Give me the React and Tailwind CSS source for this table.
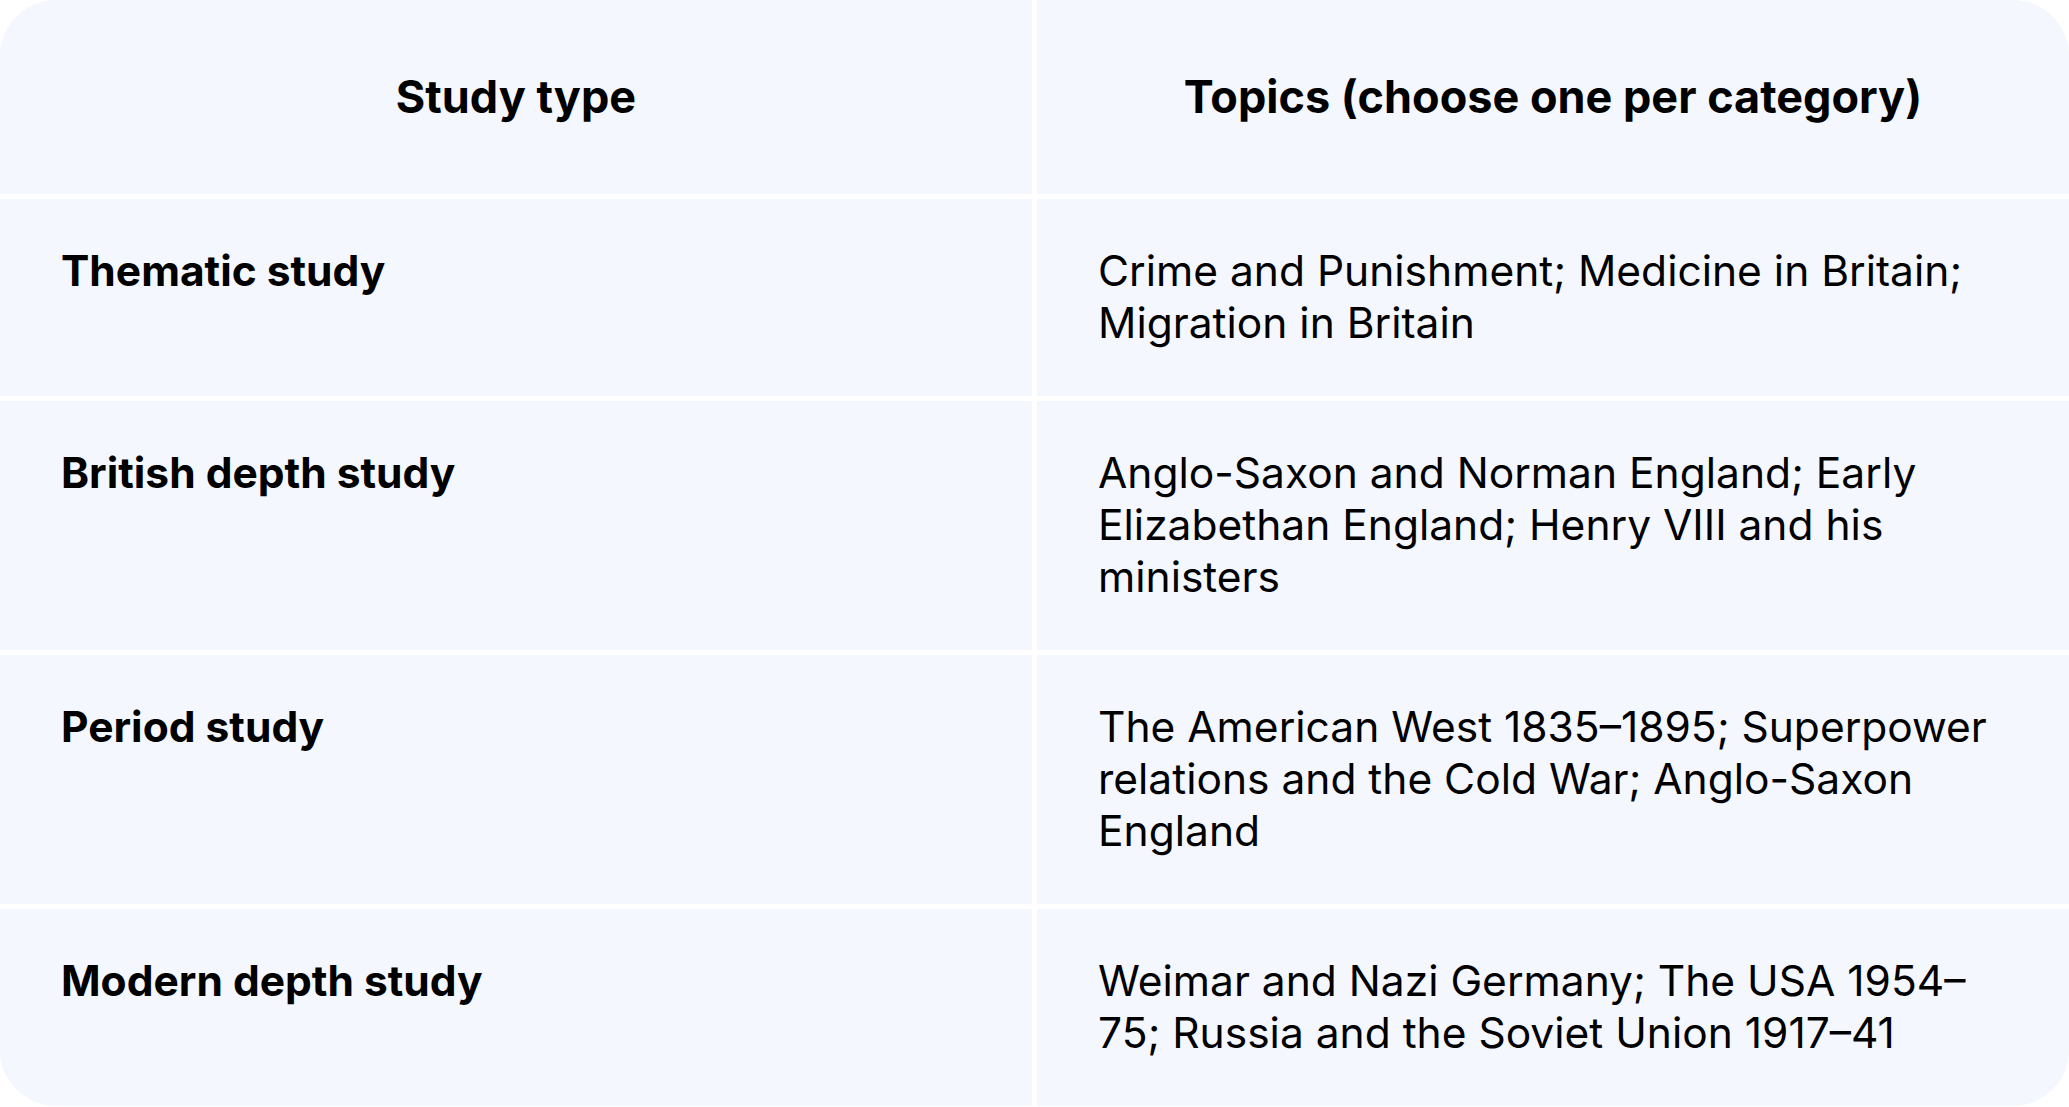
const rows = [
  {
    type: 'Thematic study',
    topics: 'Crime and Punishment; Medicine in Britain; Migration in Britain',
  },
  {
    type: 'British depth study',
    topics: 'Anglo-Saxon and Norman England; Early Elizabethan England; Henry VIII and his ministers',
  },
  {
    type: 'Period study',
    topics: 'The American West 1835–1895; Superpower relations and the Cold War; Anglo-Saxon England',
  },
  {
    type: 'Modern depth study',
    topics: 'Weimar and Nazi Germany; The USA 1954–75; Russia and the Soviet Union 1917–41',
  },
];

// Header cell
const HeadCell = ({ children }) => (
  <div className="bg-[#f4f7fd] px-[61px] py-[71px] text-center text-[45px] font-bold">{children}</div>
);

export default function App() {
  return (
    <div className="min-h-screen w-full bg-white font-['Inter','Liberation_Sans',sans-serif] text-[42.5px] leading-[52px] text-black">
      <div className="grid w-full grid-cols-2 gap-[5px] overflow-hidden rounded-[56px] bg-white">
        <HeadCell>Study type</HeadCell>
        <HeadCell>Topics (choose one per category)</HeadCell>
        {rows.map((row) => (
          <div key={row.type} className="contents">
            <div className="bg-[#f4f7fd] px-[61px] pt-[46px] pb-[47px] font-bold">{row.type}</div>
            <div className="bg-[#f4f7fd] px-[61px] pt-[46px] pb-[47px]">{row.topics}</div>
          </div>
        ))}
      </div>
    </div>
  );
}
